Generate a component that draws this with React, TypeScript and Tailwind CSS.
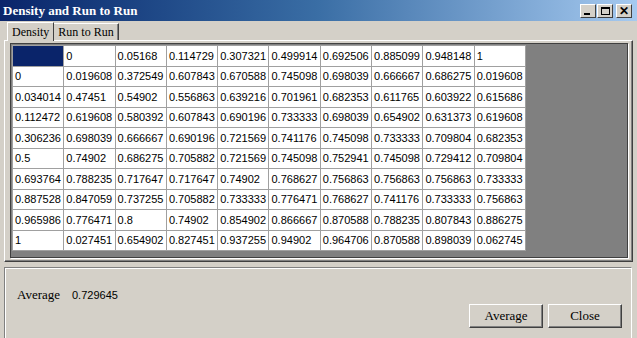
import React from "react";

const header = ["", "0", "0.05168", "0.114729", "0.307321", "0.499914", "0.692506", "0.885099", "0.948148", "1"];
const rows: string[][] = [
  ["0", "0.019608", "0.372549", "0.607843", "0.670588", "0.745098", "0.698039", "0.666667", "0.686275", "0.019608"],
  ["0.034014", "0.47451", "0.54902", "0.556863", "0.639216", "0.701961", "0.682353", "0.611765", "0.603922", "0.615686"],
  ["0.112472", "0.619608", "0.580392", "0.607843", "0.690196", "0.733333", "0.698039", "0.654902", "0.631373", "0.619608"],
  ["0.306236", "0.698039", "0.666667", "0.690196", "0.721569", "0.741176", "0.745098", "0.733333", "0.709804", "0.682353"],
  ["0.5", "0.74902", "0.686275", "0.705882", "0.721569", "0.745098", "0.752941", "0.745098", "0.729412", "0.709804"],
  ["0.693764", "0.788235", "0.717647", "0.717647", "0.74902", "0.768627", "0.756863", "0.756863", "0.756863", "0.733333"],
  ["0.887528", "0.847059", "0.737255", "0.705882", "0.733333", "0.776471", "0.768627", "0.741176", "0.733333", "0.756863"],
  ["0.965986", "0.776471", "0.8", "0.74902", "0.854902", "0.866667", "0.870588", "0.788235", "0.807843", "0.886275"],
  ["1", "0.027451", "0.654902", "0.827451", "0.937255", "0.94902", "0.964706", "0.870588", "0.898039", "0.062745"],
];

const serif = { fontFamily: '"Liberation Serif", "Noto Sans CJK TC", serif' };
const sans = { fontFamily: '"Liberation Sans", Arial, sans-serif' };

function TitleButton({ children }: { children: React.ReactNode }) {
  return (
    <div className="w-[16px] h-[14px] bg-[#d4d0c8] border border-t-white border-l-white border-r-[#404040] border-b-[#404040] flex items-center justify-center">
      {children}
    </div>
  );
}

function Btn({ label }: { label: string }) {
  return (
    <div className="w-[74px] h-[24px] bg-[#d4d0c8] border border-t-white border-l-white border-r-[#404040] border-b-[#404040] flex items-center justify-center text-[13px] text-black shadow-[inset_-1px_-1px_0_#808080]" style={serif}>
      {label}
    </div>
  );
}

export default function App() {
  const all = [header, ...rows];
  return (
    <div className="w-[637px] h-[338px] bg-[#d4d0c8] overflow-hidden flex flex-col">
      {/* Title bar */}
      <div className="h-[21px] flex items-center justify-between pl-[3px] pr-[5px] bg-gradient-to-r from-[#0a246a] via-[#3a6ea5] to-[#a6caf0]">
        <span className="text-white font-bold text-[13px] leading-none" style={serif}>Density and Run to Run</span>
        <div className="flex items-center gap-[1px]">
          <TitleButton>
            <div className="w-[6px] h-[2px] bg-black mt-[6px] -ml-[2px]" />
          </TitleButton>
          <div className="mr-[2px]">
            <TitleButton>
              <div className="w-[9px] h-[8px] border border-black border-t-2" />
            </TitleButton>
          </div>
          <TitleButton>
            <span className="text-[12px] font-bold leading-none text-black" style={sans}>✕</span>
          </TitleButton>
        </div>
      </div>

      {/* Tabs */}
      <div className="h-[19px] flex items-end pl-[7px] relative z-10">
        <div className="h-[19px] px-[4px] bg-[#d4d0c8] border-t border-l border-t-white border-l-white border-r border-r-[#404040] flex items-center text-[12px] text-black -mb-px" style={serif}>
          Density
        </div>
        <div className="h-[17px] px-[4px] border-t border-t-white border-r border-r-[#404040] shadow-[inset_-1px_0_0_#808080] flex items-center text-[12px] text-black" style={serif}>
          Run to Run
        </div>
      </div>

      {/* Tab page */}
      <div className="mx-[4px] h-[222px] border-t border-l border-t-white border-l-white border-r border-b border-r-[#404040] border-b-[#404040] shadow-[inset_-1px_-1px_0_#808080] pt-[2px] pl-[5px] pr-[4px]">
        <div className="h-[215px] bg-[#808080] border border-[#404040] shadow-[1px_1px_0_#ffffff] pt-[1px] pl-[1px]">
          <div className="w-[514px] grid grid-cols-[repeat(10,minmax(0,1fr))] gap-px bg-[#a0a0a0] border border-[#a0a0a0]">
            {all.map((r, ri) =>
              r.map((c, ci) => (
                <div
                  key={ri + "-" + ci}
                  className={
                    "h-[19.5px] flex items-center pl-[2px] text-[11px] text-black whitespace-nowrap overflow-hidden " +
                    (ri === 0 && ci === 0 ? "bg-[#0a246a]" : "bg-white")
                  }
                  style={sans}
                >
                  {c}
                </div>
              ))
            )}
          </div>
        </div>
      </div>

      {/* Bottom panel */}
      <div className="mt-[5px] ml-[4px] mr-[5px] flex-1 border-t border-l border-t-[#808080] border-l-[#808080] shadow-[inset_1px_1px_0_#ffffff] border-r border-r-white flex flex-col px-[12px] pt-[19px]">
        <div className="flex items-center text-[13px] text-black h-[16px]" style={serif}>
          <span className="w-[55px]">Average</span>
          <span style={sans} className="text-[11px]">0.729645</span>
        </div>
        <div className="flex justify-end gap-[5px] mt-[1px] -mr-[3px]">
          <Btn label="Average" />
          <Btn label="Close" />
        </div>
      </div>
    </div>
  );
}
